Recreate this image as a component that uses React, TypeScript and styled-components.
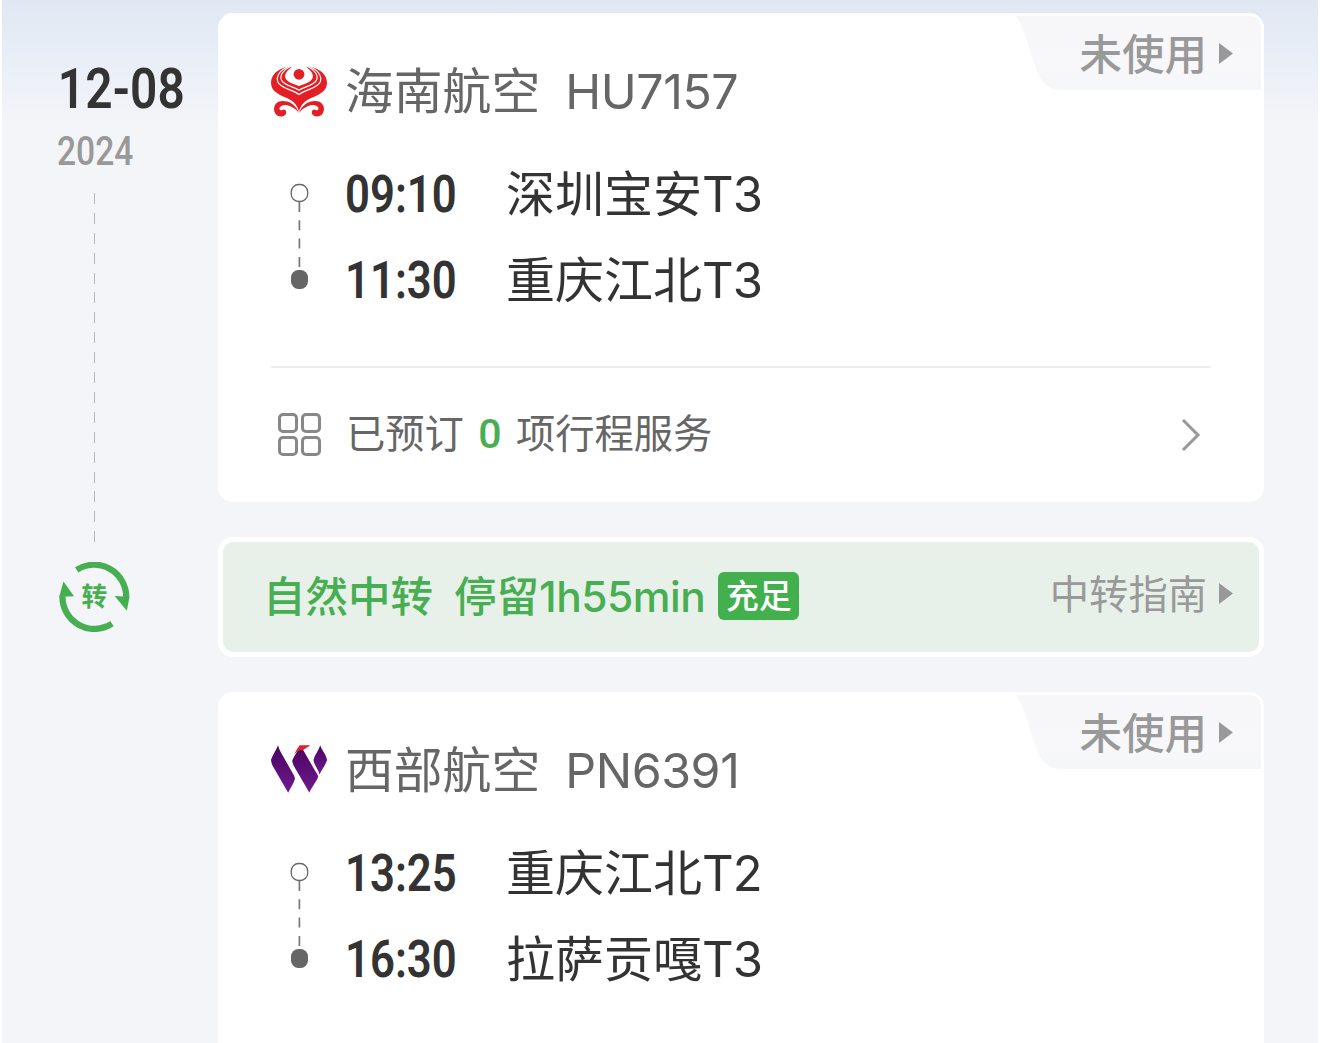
import styled, { createGlobalStyle } from "styled-components";

type Stop = { time: string; place: string; terminal: string };

const firstStops: Stop[] = [
 { time: "09:10", place: "深圳宝安", terminal: "T3" },
 { time: "11:30", place: "重庆江北", terminal: "T3" },
];

const secondStops: Stop[] = [
 { time: "13:25", place: "重庆江北", terminal: "T2" },
 { time: "16:30", place: "拉萨贡嘎", terminal: "T3" },
];

export default function App() {
 return (
  <>
   <GlobalStyle />
   <Page>
    <Timeline>
     <DateText>12-08</DateText>
     <YearText>2024</YearText>
     <TimelineDash />
     <TransferIcon />
    </Timeline>

    <Trip>
     <Card>
      <StatusTab />
      <Airline>
       <HainanLogo />
       <Han>海南航空</Han>
       <FlightNumber>HU7157</FlightNumber>
      </Airline>
      <Route stops={firstStops} />
      <Services>
       <GridIcon />
       <Han>已预订</Han>
       <Count>0</Count>
       <Han>项行程服务</Han>
       <Chevron viewBox="0 0 20 34">
        <path d="M2 2 L17 17 L2 32" />
       </Chevron>
      </Services>
     </Card>

     <Transfer>
      <TransferText>自然中转</TransferText>
      <TransferText $gap={21}>
       停留<Duration>1h55min</Duration>
      </TransferText>
      <Tag>充足</Tag>
      <Guide>
       <Han>中转指南</Han>
       <Triangle />
      </Guide>
     </Transfer>

     <Card $last>
      <StatusTab />
      <Airline>
       <WestAirLogo />
       <Han>西部航空</Han>
       <FlightNumber>PN6391</FlightNumber>
      </Airline>
      <Route stops={secondStops} />
     </Card>
    </Trip>
   </Page>
  </>
 );
}

function Route({ stops }: { stops: Stop[] }) {
 return (
  <Stops>
   <Rail viewBox="0 0 56 172">
    <rect x="20.200" y="33.500" width="16.500" height="17" rx="7.500" fill="none" stroke="#666" strokeWidth="1.300" />
    <path d="M28.400 51 V119" stroke="#777" strokeWidth="1.700" strokeDasharray="10 8.300" />
    <rect x="20" y="119" width="17" height="19" rx="7.500" fill="#666" />
   </Rail>
   <div>
    {stops.map((stop) => (
     <StopRow key={stop.time}>
      <TimeBox>
       <Time>{stop.time}</Time>
      </TimeBox>
      <Han>{stop.place}</Han>
      <Terminal>{stop.terminal}</Terminal>
     </StopRow>
    ))}
   </div>
  </Stops>
 );
}

function StatusTab() {
 return (
  <Status>
   <StatusShape viewBox="0 0 246 75">
    <defs>
     <linearGradient id="tab" x1="0" y1="0" x2="0" y2="1">
      <stop offset="0" stopColor="#f7f7fa" />
      <stop offset="0.7" stopColor="#f8f8fa" />
      <stop offset="1" stopColor="#f5f6f8" />
     </linearGradient>
    </defs>
    <path
     d="M0 0 H234 Q246 0 246 13 V74 H46 C34 74 26 66 22 55 C17 43 12 23 7 11 C5 6 3 2 0 0Z"
     fill="url(#tab)"
    />
   </StatusShape>
   <StatusText>
    <Han $lift={2}>未使用</Han>
    <Triangle />
   </StatusText>
  </Status>
 );
}

function TransferIcon() {
 return (
  <TransferSvg viewBox="57 125 214 212">
   <path d="M110 149 A97 97 0 0 1 260 232" />
   <path d="M217 312 A97 97 0 0 1 67 229" />
   <polygon points="225,228 270,230 262,273" />
   <polygon points="102,229 57,231 70,184" />
   <text x="163.500" y="259" textAnchor="middle">
    转
   </text>
  </TransferSvg>
 );
}

function HainanLogo() {
 return (
  <Logo viewBox="64 48 166 150">
   <g fill="#e31e24">
    <path d="M113 50 C84 56 64 74 64 98 C64 124 92 134 114 144 C134 153 142 166 147 183 C152 166 160 153 180 144 C202 134 230 124 230 98 C230 74 210 56 181 50 L169 51 C184 61 191 73 187 84 C181 97 163 100 147 107 C131 100 113 97 107 84 C103 73 110 61 125 51Z" />
    <circle cx="147" cy="72" r="16" />
    <path d="M147 187 C139 164 121 151 99 151 C83 151 73 161 73 174 C73 188 82 197 94 197 C103 197 110 191 109 183 C108 177 102 174 97 178 C92 181 86 175 91 169 C97 162 108 161 120 166 C132 171 141 178 147 187Z" />
    <path d="M147 187 C155 164 173 151 195 151 C211 151 221 161 221 174 C221 188 212 197 200 197 C191 197 184 191 185 183 C186 177 192 174 197 178 C202 181 208 175 203 169 C197 162 186 161 174 166 C162 171 153 178 147 187Z" />
   </g>
   <g fill="none" stroke="#fff" strokeWidth="3.500">
    <path d="M115 49 C90 60 78 78 84 94 C92 114 125 116 147 132 C169 116 202 114 210 94 C216 78 204 60 179 49" />
    <path d="M121 49 C99 60 89 76 95 89 C103 106 130 108 147 119 C164 108 191 106 199 89 C205 76 195 60 173 49" />
   </g>
  </Logo>
 );
}

function WestAirLogo() {
 return (
  <Logo viewBox="64 48 166 150">
   <defs>
    <linearGradient id="west" x1="0" y1="0" x2="0" y2="1">
     <stop offset="0" stopColor="#4b0561" />
     <stop offset="1" stopColor="#6e1a8e" />
    </linearGradient>
   </defs>
   <g fill="url(#west)">
    <path d="M85 48 C80 61 69 76 64 91 C65 102 68 108 73 116 L115 189 C121 174 131 163 135 148 C134 139 130 134 126 127 L96 74 C91 65 87 57 85 48Z" />
    <path d="M148 56 C142 68 132 80 127 93 C128 103 131 109 136 117 L178 189 C184 172 200 156 204 141 C202 134 197 128 193 121 L158 60Z" />
    <path d="M210 48 C206 62 194 76 190 91 C191 107 204 118 208 135 C213 121 226 108 230 92 C229 77 215 64 210 48Z" />
   </g>
   <path d="M133 75 C137 66 144 55 149 48 H181 L157 64 C151 61 143 64 133 75Z" fill="#d9232e" />
  </Logo>
 );
}

function GridIcon() {
 return (
  <GridSvg viewBox="0 0 43 43">
   <rect x="1.500" y="1.500" width="17" height="17" rx="3.500" />
   <rect x="24.500" y="1.500" width="17" height="17" rx="3.500" />
   <rect x="1.500" y="24.500" width="17" height="17" rx="3.500" />
   <rect x="24.500" y="24.500" width="17" height="17" rx="3.500" />
  </GridSvg>
 );
}

function Triangle() {
 return (
  <TriangleSvg viewBox="0 0 14 21">
   <path d="M0 0 L14 10.500 L0 21Z" />
  </TriangleSvg>
 );
}

const GlobalStyle = createGlobalStyle`
 * {
  box-sizing: border-box;
 }
 body {
  margin: 0;
  overflow: hidden;
  background-color: #ffffff;
  font-family: Inter, "Noto Sans CJK SC", sans-serif;
 }
 svg {
  display: block;
  flex-shrink: 0;
 }
`;

const Page = styled.main`
 display: flex;
 width: 1316px;
 height: 1043px;
 margin-left: 2px;
 overflow: hidden;
 background: linear-gradient(to bottom, #e0e8f3 0, #e9eef7 60px, #f4f5f8 128px);
 white-space: nowrap;
`;

/* the Chinese glyphs sit low in their line box, so they are lifted to the row's centre */
const Han = styled.span<{ $lift?: number }>`
 padding-bottom: ${({ $lift }) => ($lift ?? 4) * 2}px;
`;

const Timeline = styled.aside`
 display: flex;
 flex-direction: column;
 width: 216px;
 padding: 59px 0 0 55px;
`;

const DateText = styled.div`
 height: 60px;
 padding-left: 1px;
 font-family: Roboto, sans-serif;
 font-size: 55px;
 font-weight: 600;
 line-height: 60px;
 color: #333333;
 transform: scaleX(0.87);
 transform-origin: left;
`;

const YearText = styled.div`
 height: 64px;
 font-family: Roboto, sans-serif;
 font-size: 40px;
 font-weight: 500;
 line-height: 66px;
 color: #999999;
 transform: scaleX(0.84);
 transform-origin: left;
`;

const TimelineDash = styled.div`
 width: 1px;
 height: 350px;
 margin: 10px 0 0 37px;
 background: repeating-linear-gradient(to bottom, #b8b8b8 0 11px, transparent 11px 19.9px);
`;

const TransferSvg = styled.svg`
 width: 71px;
 height: 70px;
 margin: 19px 0 0 2px;
 path {
  fill: none;
  stroke: #48ae52;
  stroke-width: 19px;
 }
 polygon {
  fill: #43b04e;
 }
 text {
  fill: #48ae52;
  font-size: 78px;
  font-weight: 700;
 }
`;

const Trip = styled.div`
 display: flex;
 flex-direction: column;
 width: 1046px;
 padding-top: 13px;
`;

const Card = styled.section<{ $last?: boolean }>`
 position: relative;
 height: ${({ $last }) => ($last ? "400px" : "488.500px")};
 flex-shrink: 0;
 padding: 35px 53px 0;
 border-radius: 15px;
 background-color: #ffffff;
`;

const Airline = styled.div`
 display: flex;
 align-items: center;
 height: 86px;
 color: #666666;
 font-size: 48.800px;
`;

const Logo = styled.svg`
 width: 56px;
 height: 51px;
 margin-right: 18px;
`;

const FlightNumber = styled.span`
 margin-left: 25px;
 font-size: 48.300px;
 letter-spacing: -0.4px;
`;

const Stops = styled.div`
 display: flex;
 margin-top: 17px;
 color: #333333;
`;

const Rail = styled.svg`
 width: 56px;
 height: 172px;
 margin-right: 18px;
`;

const StopRow = styled.div`
 display: flex;
 align-items: center;
 height: 86px;
 font-size: 49px;
`;

const TimeBox = styled.div`
 width: 161px;
`;

const Time = styled.div`
 font-family: Roboto, sans-serif;
 font-size: 52px;
 font-weight: 600;
 transform: scaleX(0.84);
 transform-origin: left;
`;

const Terminal = styled.span`
 font-size: 49px;
 letter-spacing: -1px;
`;

const Services = styled.div`
 display: flex;
 align-items: center;
 height: 135px;
 margin-top: 43px;
 padding: 0 10px 0 7px;
 border-top: 2px solid #ededed;
 color: #666666;
 font-size: 39.300px;
`;

const GridSvg = styled.svg`
 width: 43px;
 height: 43px;
 margin-right: 25px;
 fill: none;
 stroke: #888888;
 stroke-width: 3px;
`;

const Count = styled.span`
 width: 52px;
 padding-bottom: 2px;
 font-family: Roboto, sans-serif;
 font-size: 41px;
 font-weight: 500;
 text-align: center;
 color: #48ae52;
`;

const Chevron = styled.svg`
 width: 20px;
 height: 34px;
 margin-left: auto;
 fill: none;
 stroke: #999999;
 stroke-width: 3px;
`;

const Transfer = styled.section`
 display: flex;
 align-items: center;
 flex-shrink: 0;
 height: 120px;
 margin: 35.500px 0 35px;
 padding: 0 26px 0 40px;
 border: 5px solid #ffffff;
 border-radius: 15px;
 background-color: #e7f1e9;
`;

const TransferText = styled.span<{ $gap?: number }>`
 margin-left: ${({ $gap }) => $gap ?? 0}px;
 padding-bottom: 8px;
 color: #48ae52;
 font-size: 42.500px;
 font-weight: 500;
`;

const Duration = styled.span`
 letter-spacing: -0.5px;
`;

const Tag = styled.span`
 width: 81px;
 height: 48px;
 margin: 0 0 2px 13px;
 border-radius: 6px;
 background-color: #43b04e;
 color: #ffffff;
 font-size: 33px;
 font-weight: 500;
 line-height: 48px;
 text-align: center;
`;

const Guide = styled.span`
 display: flex;
 align-items: center;
 margin-left: auto;
 padding-bottom: 7px;
 color: #999999;
 font-size: 39.300px;

 ${Han} {
  padding-bottom: 5px;
 }
`;

const TriangleSvg = styled.svg`
 width: 14px;
 height: 21px;
 margin-left: 12px;
 fill: #999999;
`;

const Status = styled.div`
 position: absolute;
 top: 3px;
 right: 3px;
 width: 246px;
 height: 75px;
`;

const StatusShape = styled.svg`
 width: 246px;
 height: 75px;
`;

const StatusText = styled.div`
 position: absolute;
 inset: 0 28px 0 auto;
 display: flex;
 align-items: center;
 color: #999999;
 font-size: 42.500px;
 font-weight: 500;
`;
